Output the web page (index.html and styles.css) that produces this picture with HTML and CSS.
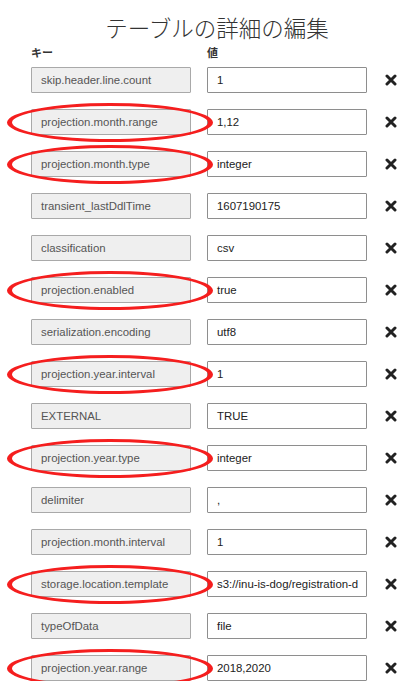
FILE: index.html
```html
<!DOCTYPE html>
<html lang="ja">
<head>
<meta charset="utf-8">
<link rel="stylesheet" href="styles.css">
</head>
<body>
<div class="page">
  <h1 class="title">テーブルの詳細の編集</h1>
  <div class="heads">
    <div class="head key-head">キー</div>
    <div class="head">値</div>
  </div>
  <div class="rows">
    <div class="row"><div class="key">skip.header.line.count</div><div class="val">1</div><span class="del"><svg viewBox="0 0 12 12" width="12" height="12"><path d="M2 2L10 10M10 2L2 10" /></svg></span></div>
    <div class="row"><span class="circle"></span><div class="key">projection.month.range</div><div class="val">1,12</div><span class="del"><svg viewBox="0 0 12 12" width="12" height="12"><path d="M2 2L10 10M10 2L2 10" /></svg></span></div>
    <div class="row"><span class="circle"></span><div class="key">projection.month.type</div><div class="val">integer</div><span class="del"><svg viewBox="0 0 12 12" width="12" height="12"><path d="M2 2L10 10M10 2L2 10" /></svg></span></div>
    <div class="row"><div class="key">transient_lastDdlTime</div><div class="val">1607190175</div><span class="del"><svg viewBox="0 0 12 12" width="12" height="12"><path d="M2 2L10 10M10 2L2 10" /></svg></span></div>
    <div class="row"><div class="key">classification</div><div class="val">csv</div><span class="del"><svg viewBox="0 0 12 12" width="12" height="12"><path d="M2 2L10 10M10 2L2 10" /></svg></span></div>
    <div class="row"><span class="circle"></span><div class="key">projection.enabled</div><div class="val">true</div><span class="del"><svg viewBox="0 0 12 12" width="12" height="12"><path d="M2 2L10 10M10 2L2 10" /></svg></span></div>
    <div class="row"><div class="key">serialization.encoding</div><div class="val">utf8</div><span class="del"><svg viewBox="0 0 12 12" width="12" height="12"><path d="M2 2L10 10M10 2L2 10" /></svg></span></div>
    <div class="row"><span class="circle"></span><div class="key">projection.year.interval</div><div class="val">1</div><span class="del"><svg viewBox="0 0 12 12" width="12" height="12"><path d="M2 2L10 10M10 2L2 10" /></svg></span></div>
    <div class="row"><div class="key">EXTERNAL</div><div class="val">TRUE</div><span class="del"><svg viewBox="0 0 12 12" width="12" height="12"><path d="M2 2L10 10M10 2L2 10" /></svg></span></div>
    <div class="row"><span class="circle"></span><div class="key">projection.year.type</div><div class="val">integer</div><span class="del"><svg viewBox="0 0 12 12" width="12" height="12"><path d="M2 2L10 10M10 2L2 10" /></svg></span></div>
    <div class="row"><div class="key">delimiter</div><div class="val">,</div><span class="del"><svg viewBox="0 0 12 12" width="12" height="12"><path d="M2 2L10 10M10 2L2 10" /></svg></span></div>
    <div class="row"><div class="key">projection.month.interval</div><div class="val">1</div><span class="del"><svg viewBox="0 0 12 12" width="12" height="12"><path d="M2 2L10 10M10 2L2 10" /></svg></span></div>
    <div class="row"><span class="circle"></span><div class="key">storage.location.template</div><div class="val"><span class="clip">s3://inu-is-dog/registration-data</span></div><span class="del"><svg viewBox="0 0 12 12" width="12" height="12"><path d="M2 2L10 10M10 2L2 10" /></svg></span></div>
    <div class="row"><div class="key">typeOfData</div><div class="val">file</div><span class="del"><svg viewBox="0 0 12 12" width="12" height="12"><path d="M2 2L10 10M10 2L2 10" /></svg></span></div>
    <div class="row"><span class="circle"></span><div class="key">projection.year.range</div><div class="val">2018,2020</div><span class="del"><svg viewBox="0 0 12 12" width="12" height="12"><path d="M2 2L10 10M10 2L2 10" /></svg></span></div>
  </div>
</div>
</body>
</html>
```
FILE: styles.css
```css
html, body {
  margin: 0;
  padding: 0;
  background: #ffffff;
}
.page {
  font-family: "Liberation Sans", Arial, "Noto Sans CJK JP", sans-serif;
  color: #333333;
  padding: 0 0 0 31px;
  width: 384px;
}
.title {
  margin: 0;
  padding: 12px 12px 0 0;
  height: 30px;
  line-height: 30px;
  font-size: 22.5px;
  font-weight: 300;
  color: #333333;
  text-align: center;
  font-family: "Noto Sans CJK JP", sans-serif;
  box-sizing: content-box;
}
.heads {
  display: flex;
  gap: 16px;
  margin-top: 1px;
  height: 18px;
  align-items: center;
}
.head {
  font-size: 11px;
  font-weight: bold;
  color: #333333;
  font-family: "Noto Sans CJK JP", sans-serif;
}
.key-head {
  width: 160px;
}
.rows {
  display: flex;
  flex-direction: column;
  gap: 16px;
  margin-top: 6px;
}
.row {
  position: relative;
  display: flex;
  align-items: center;
  gap: 16px;
  height: 26px;
}
.key, .val {
  box-sizing: border-box;
  width: 160px;
  height: 26px;
  line-height: 24px;
  font-size: 11.4px;
  padding: 0 9px;
  white-space: nowrap;
  overflow: hidden;
  border: 1px solid #a9a9a9;
  border-radius: 1px;
}
.key {
  background: #efefef;
  color: #555555;
}
.val {
  background: #ffffff;
  color: #222222;
  border-color: #8e8e8e;
}
.clip {
  display: block;
  overflow: hidden;
  width: 141px;
}
.del {
  display: flex;
  align-items: center;
  justify-content: center;
  width: 12px;
  height: 12px;
  margin-left: 2px;
}
.del svg path {
  stroke: #222222;
  stroke-width: 3;
  stroke-linecap: round;
  fill: none;
}
.circle {
  position: absolute;
  left: -24px;
  top: -6px;
  width: 206px;
  height: 39px;
  box-sizing: border-box;
  border-style: solid;
  border-color: #f51e1e;
  border-width: 3.5px 5px;
  border-radius: 50%;
  pointer-events: none;
}
```
